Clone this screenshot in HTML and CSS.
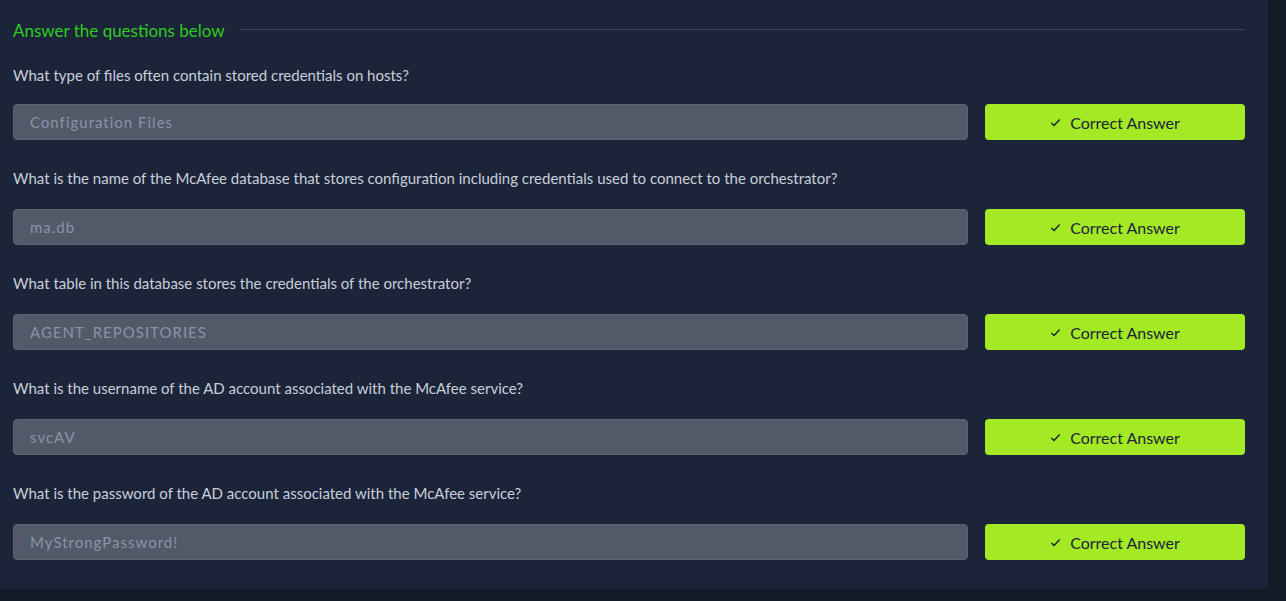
FILE: index.html
```html
<!DOCTYPE html>
<html>
<head>
<meta charset="utf-8">
<link rel="stylesheet" href="styles.css">
</head>
<body>
<div class="panel">
  <div class="title-row">
    <span class="title">Answer the questions below</span>
    <span class="rule"></span>
  </div>
  <div class="q">
    <div class="q-text">What type of files often contain stored credentials on hosts?</div>
    <div class="q-row">
      <div class="answer">Configuration Files</div>
      <button class="btn"><svg viewBox="0 0 12 12" width="11" height="11"><path d="M1.5 6.5 L4.5 9.3 L10.5 2.8" fill="none" stroke="currentColor" stroke-width="1.6"/></svg>Correct Answer</button>
    </div>
  </div>
  <div class="q">
    <div class="q-text">What is the name of the McAfee database that stores configuration including credentials used to connect to the orchestrator?</div>
    <div class="q-row">
      <div class="answer">ma.db</div>
      <button class="btn"><svg viewBox="0 0 12 12" width="11" height="11"><path d="M1.5 6.5 L4.5 9.3 L10.5 2.8" fill="none" stroke="currentColor" stroke-width="1.6"/></svg>Correct Answer</button>
    </div>
  </div>
  <div class="q">
    <div class="q-text">What table in this database stores the credentials of the orchestrator?</div>
    <div class="q-row">
      <div class="answer">AGENT_REPOSITORIES</div>
      <button class="btn"><svg viewBox="0 0 12 12" width="11" height="11"><path d="M1.5 6.5 L4.5 9.3 L10.5 2.8" fill="none" stroke="currentColor" stroke-width="1.6"/></svg>Correct Answer</button>
    </div>
  </div>
  <div class="q">
    <div class="q-text">What is the username of the AD account associated with the McAfee service?</div>
    <div class="q-row">
      <div class="answer">svcAV</div>
      <button class="btn"><svg viewBox="0 0 12 12" width="11" height="11"><path d="M1.5 6.5 L4.5 9.3 L10.5 2.8" fill="none" stroke="currentColor" stroke-width="1.6"/></svg>Correct Answer</button>
    </div>
  </div>
  <div class="q">
    <div class="q-text">What is the password of the AD account associated with the McAfee service?</div>
    <div class="q-row">
      <div class="answer">MyStrongPassword!</div>
      <button class="btn"><svg viewBox="0 0 12 12" width="11" height="11"><path d="M1.5 6.5 L4.5 9.3 L10.5 2.8" fill="none" stroke="currentColor" stroke-width="1.6"/></svg>Correct Answer</button>
    </div>
  </div>
</div>
</body>
</html>
```

FILE: styles.css
```css
html, body {
  margin: 0;
  padding: 0;
  background: #141a28;
  height: 100%;
}
body {
  font-family: Lato, "Noto Sans", sans-serif;
  overflow: hidden;
}
.panel {
  width: 1268px;
  height: 589px;
  box-sizing: border-box;
  background: #1c2439;
  padding: 19px 23px 0 13px;
  border-radius: 0 0 6px 0;
}
.title-row {
  display: flex;
  align-items: center;
  height: 22px;
}
.title {
  color: #2ecc20;
  font-size: 17px;
  white-space: nowrap;
}
.rule {
  flex: 1;
  height: 1px;
  background: #3a4356;
  margin-left: 15px;
  margin-top: -2px;
}
.q {
  padding-top: 23px;
}
.q > .q-row {
  margin-top: 18px;
}
.q + .q {
  padding-top: 27px;
}
.q + .q > .q-row {
  margin-top: 20px;
}
.q-text {
  color: #c8cfdb;
  font-size: 15px;
  line-height: 22px;
}
.q-row {
  display: flex;
  gap: 17px;
}
.answer {
  flex: 1;
  height: 36px;
  box-sizing: border-box;
  background: #525a6a;
  border: 1px solid #5b6373;
  border-radius: 4px;
  color: #8a93a5;
  font-size: 15px;
  letter-spacing: 1px;
  line-height: 34px;
  padding-left: 16px;
}
.btn {
  width: 260px;
  height: 36px;
  border: none;
  border-radius: 4px;
  background: #a3ea24;
  color: #1c2439;
  font-family: Lato, "Noto Sans", sans-serif;
  font-size: 16px;
  display: flex;
  align-items: center;
  justify-content: center;
  gap: 9px;
  padding: 0;
}
.btn svg {
  display: block;
}
```
